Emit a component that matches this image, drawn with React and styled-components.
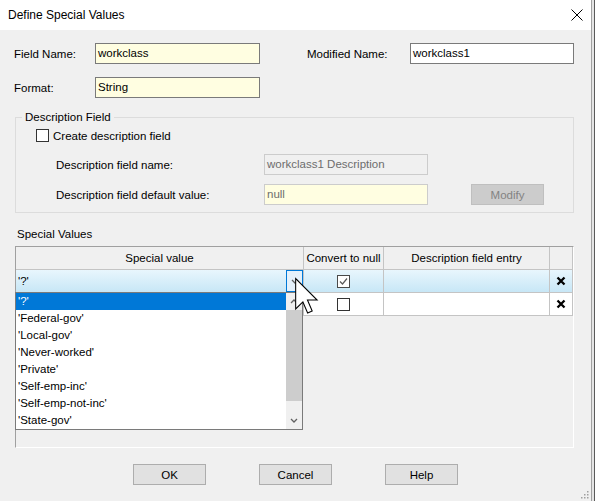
import React from "react";
import styled, { createGlobalStyle } from "styled-components";

//Global page reset
const GlobalStyle = createGlobalStyle`
  html, body {
    margin: 0;
    padding: 0;
    background: #f0f0f0;
  }
  body {
    font-family: "Liberation Sans", Arial, sans-serif;
    font-size: 11.5px;
    color: #000;
  }
`;

const SPECIAL_VALUES = [
  "'?'",
  "'Federal-gov'",
  "'Local-gov'",
  "'Never-worked'",
  "'Private'",
  "'Self-emp-inc'",
  "'Self-emp-not-inc'",
  "'State-gov'",
];

const Chevron = ({ up }) => (
  <svg width="8" height="5" viewBox="0 0 8 5">
    <path
      d={up ? "M1 4 L4 1 L7 4" : "M1 1 L4 4 L7 1"}
      fill="none"
      stroke="#606060"
      strokeWidth="1.3"
    />
  </svg>
);

const Cross = () => (
  <svg width="10" height="10" viewBox="0 0 10 10">
    <path d="M1.5 1.5 L8.5 8.5 M8.5 1.5 L1.5 8.5" stroke="#000" strokeWidth="2.3" />
  </svg>
);

const Check = ({ checked }) => (
  <CheckBox $dim={checked}>
    {checked && (
      <svg width="11" height="11" viewBox="0 0 11 11">
        <path d="M2 5.5 L4.5 8 L9 2.5" fill="none" stroke="#5a5a5a" strokeWidth="1.2" />
      </svg>
    )}
  </CheckBox>
);

const App = () => {
  return (
    <>
      <GlobalStyle />
      <Page>
        <Window>
          <TitleBar>
            <span>Define Special Values</span>
            <svg width="12" height="12" viewBox="0 0 12 12">
              <path d="M0.5 0.5 L11.5 11.5 M11.5 0.5 L0.5 11.5" stroke="#000" strokeWidth="1" />
            </svg>
          </TitleBar>

          <Content>
            <FormGrid>
              <Label>Field Name:</Label>
              <TextBox $bg="#fffee1">workclass</TextBox>
              <Label $col={4}>Modified Name:</Label>
              <TextBox>workclass1</TextBox>
              <Label>Format:</Label>
              <TextBox $bg="#fffee1">String</TextBox>
            </FormGrid>

            <GroupBox>
              <Legend>Description Field</Legend>
              <CheckRow>
                <Check />
                <span>Create description field</span>
              </CheckRow>
              <DescRow $top={12}>
                <Label>Description field name:</Label>
                <TextBox $bg="#f0f0f0" $border="#cccccc" $color="#6d6d6d">
                  workclass1 Description
                </TextBox>
              </DescRow>
              <DescRow $top={9}>
                <Label>Description field default value:</Label>
                <TextBox $bg="#fffee1" $border="#cccccc" $color="#6d6d6d">
                  null
                </TextBox>
                <span />
                <Button $disabled>Modify</Button>
              </DescRow>
            </GroupBox>

            <SectionLabel>Special Values</SectionLabel>

            <TableFrame>
              <GridRow>
                <HeaderCell>Special value</HeaderCell>
                <HeaderCell>Convert to null</HeaderCell>
                <HeaderCell>Description field entry</HeaderCell>
                <HeaderCell />
              </GridRow>
              <GridRow $active>
                <Cell $left>
                  <ComboText>'?'</ComboText>
                  <ComboButton>
                    <Chevron />
                  </ComboButton>
                </Cell>
                <Cell>
                  <Check checked />
                </Cell>
                <Cell />
                <Cell>
                  <Cross />
                </Cell>
              </GridRow>
              <GridRow>
                <Cell $left />
                <Cell>
                  <Check />
                </Cell>
                <Cell />
                <Cell>
                  <Cross />
                </Cell>
              </GridRow>

              <DropList>
                <Items>
                  {SPECIAL_VALUES.map((v, i) => (
                    <Item key={v} $selected={i === 0}>
                      {v}
                    </Item>
                  ))}
                </Items>
                <ScrollBar>
                  <ScrollArrow>
                    <Chevron up />
                  </ScrollArrow>
                  <Thumb />
                  <Track />
                  <ScrollArrow>
                    <Chevron />
                  </ScrollArrow>
                </ScrollBar>
              </DropList>
            </TableFrame>
          </Content>

          <Footer>
            <Button>OK</Button>
            <Button>Cancel</Button>
            <Button>Help</Button>
          </Footer>

          <Cursor width="23" height="38" viewBox="0 0 12 20">
            <path
              d="M0.3 0.3 L0.3 16.3 L4.1 12.6 L6.6 18.4 L9 17.4 L6.5 11.6 L11.6 11.6 Z"
              fill="#fff"
              stroke="#000"
              strokeWidth="0.55"
              strokeLinejoin="miter"
            />
          </Cursor>

          <Grip width="9" height="9" viewBox="0 0 9 9">
            <g fill="#a0a0a0">
              <rect x="7" y="1" width="1.5" height="1.5" />
              <rect x="4" y="4" width="1.5" height="1.5" />
              <rect x="7" y="4" width="1.5" height="1.5" />
              <rect x="1" y="7" width="1.5" height="1.5" />
              <rect x="4" y="7" width="1.5" height="1.5" />
              <rect x="7" y="7" width="1.5" height="1.5" />
            </g>
          </Grip>
        </Window>
        <Edge />
      </Page>
    </>
  );
};

const Page = styled.div`
  display: flex;
  width: 595px;
  height: 501px;
`;

const Window = styled.div`
  position: relative;
  display: flex;
  flex-direction: column;
  width: 592px;
  height: 501px;
  box-sizing: border-box;
  border-right: 1px solid #a0a0a0;
  background: #f0f0f0;
  overflow: hidden;
`;

const Edge = styled.div`
  flex: 1;
  background: #e4e4e4;
  border-right: 1px solid #5a5a5a;
`;

const TitleBar = styled.div`
  height: 30px;
  flex-shrink: 0;
  display: flex;
  align-items: center;
  justify-content: space-between;
  padding: 0 8px 0 8px;
  background: #fff;
  font-size: 12px;
`;

const Content = styled.div`
  padding: 13px 0 0 14px;
`;

const FormGrid = styled.div`
  display: grid;
  grid-template-columns: 81px 165px 47px 103px 164px;
  grid-template-rows: 21px 21px;
  row-gap: 13px;
  align-items: center;
`;

const Label = styled.span`
  white-space: nowrap;
  grid-column: ${(p) => p.$col || "auto"};
`;

const TextBox = styled.div`
  height: 21px;
  box-sizing: border-box;
  padding: 0 2px;
  line-height: 19px;
  white-space: nowrap;
  overflow: hidden;
  border: 1px solid ${(p) => p.$border || "#7a7a7a"};
  background: ${(p) => p.$bg || "#fff"};
  color: ${(p) => p.$color || "#000"};
`;

const GroupBox = styled.fieldset`
  margin: 12px 0 0 1px;
  width: 559px;
  min-width: 0;
  box-sizing: border-box;
  padding: 0 0 7px 0;
  border: 1px solid #dcdcdc;
`;

const Legend = styled.legend`
  margin-left: 6px;
  padding: 0 3px;
  line-height: 14px;
`;

const CheckRow = styled.div`
  display: flex;
  align-items: center;
  gap: 4px;
  height: 13px;
  margin: 5px 0 0 20px;
`;

const CheckBox = styled.div`
  width: 13px;
  height: 13px;
  box-sizing: border-box;
  border: 1px solid ${(p) => (p.$dim ? "#4a4a4a" : "#333")};
  background: #fff;
  display: flex;
  align-items: center;
  justify-content: center;
  flex-shrink: 0;
`;

const DescRow = styled.div`
  display: grid;
  grid-template-columns: 208px 164px 43px 73px;
  align-items: center;
  height: 21px;
  margin: ${(p) => p.$top}px 0 0 40px;
`;

const Button = styled.div`
  width: 73px;
  height: 21px;
  box-sizing: border-box;
  display: flex;
  align-items: center;
  justify-content: center;
  border: 1px solid ${(p) => (p.$disabled ? "#bfbfbf" : "#adadad")};
  background: ${(p) => (p.$disabled ? "#cccccc" : "#e1e1e1")};
  color: ${(p) => (p.$disabled ? "#838383" : "#000")};
`;

const SectionLabel = styled.div`
  margin: 14px 0 5px 3px;
  line-height: 14px;
`;

const TableFrame = styled.div`
  position: relative;
  margin-left: 1px;
  width: 559px;
  height: 202px;
  box-sizing: border-box;
  border-top: 1px solid #a0a0a0;
  border-left: 1px solid #a0a0a0;
  border-right: 1px solid #fff;
  border-bottom: 1px solid #fff;
`;

const GridRow = styled.div`
  display: grid;
  grid-template-columns: 288px 80px 166px 23px;
  height: 23px;
  background: ${(p) =>
    p.$active ? "linear-gradient(#e8f6fd, #c6e6f6)" : "#fff"};

  &:first-child {
    background: #f0f0f0;
  }
`;

const HeaderCell = styled.div`
  box-sizing: border-box;
  border-right: 1px solid #c4c4c4;
  border-bottom: 1px solid #c4c4c4;
  display: flex;
  align-items: center;
  justify-content: center;
  white-space: nowrap;
  overflow: hidden;
`;

const Cell = styled.div`
  box-sizing: border-box;
  border-right: 1px solid #c4c4c4;
  border-bottom: 1px solid #c4c4c4;
  display: flex;
  align-items: center;
  justify-content: ${(p) => (p.$left ? "space-between" : "center")};
`;

const ComboText = styled.span`
  padding-left: 2px;
`;

const ComboButton = styled.div`
  width: 17px;
  height: 100%;
  box-sizing: border-box;
  border: 1px solid #0078d7;
  background: #e5f1fb;
  display: flex;
  align-items: center;
  justify-content: center;
`;

const DropList = styled.div`
  position: absolute;
  left: -1px;
  top: 45px;
  width: 288px;
  height: 138px;
  box-sizing: border-box;
  border: 1px solid #7a7a7a;
  background: #fff;
  display: flex;
`;

const Items = styled.div`
  flex: 1;
`;

const Item = styled.div`
  height: 17px;
  line-height: 17px;
  padding-left: 2px;
  white-space: nowrap;
  background: ${(p) => (p.$selected ? "#0078d7" : "transparent")};
  color: ${(p) => (p.$selected ? "#fff" : "#000")};
`;

const ScrollBar = styled.div`
  width: 16px;
  display: flex;
  flex-direction: column;
  background: #f0f0f0;
`;

const ScrollArrow = styled.div`
  height: 17px;
  display: flex;
  align-items: center;
  justify-content: center;
`;

const Thumb = styled.div`
  height: 91px;
  background: #cdcdcd;
`;

const Track = styled.div`
  flex: 1;
`;

const Footer = styled.div`
  display: flex;
  justify-content: center;
  gap: 53px;
  margin-top: 16px;
`;

const Cursor = styled.svg`
  position: absolute;
  left: 295px;
  top: 278px;
  overflow: visible;
`;

const Grip = styled.svg`
  position: absolute;
  right: 2px;
  bottom: 2px;
`;

export default App;
